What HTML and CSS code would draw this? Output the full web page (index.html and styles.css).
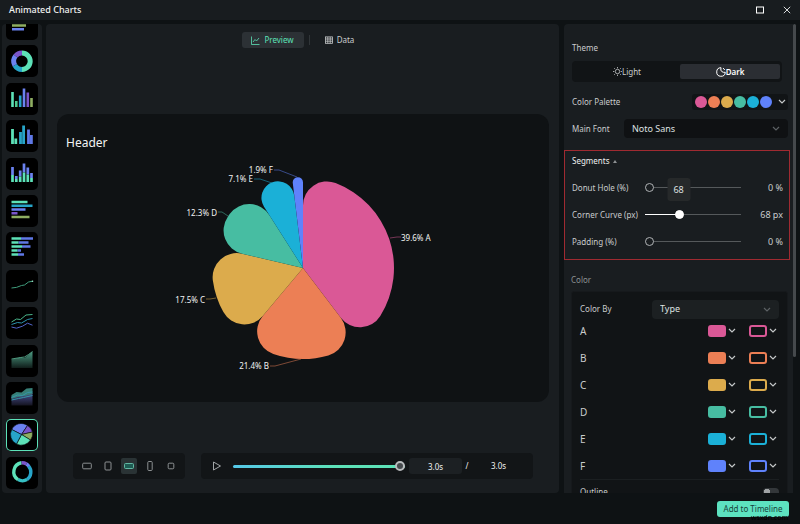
FILE: index.html
```html
<!DOCTYPE html>
<html lang="en">
<head>
    <meta charset="utf-8">
    <title>Animated Charts</title>
    <meta name="viewport" content="width=device-width, initial-scale=1.0">
    <link rel="stylesheet" href="styles.css">
</head>
<body>
    <header class="titlebar">
        <h1>Animated Charts</h1>
        <button class="window-btn" aria-label="Maximize">
            <svg width="8" height="8" viewBox="0 0 8 8"><rect x="0.5" y="1" width="7" height="6" fill="none" stroke="#fff" stroke-width="1"/></svg>
        </button>
        <button class="window-btn" aria-label="Close">
            <svg width="8" height="8" viewBox="0 0 8 8"><path d="M0.8 0.8 7.2 7.2M7.2 0.8 0.8 7.2" stroke="#d8dadb" stroke-width="1"/></svg>
        </button>
    </header>

    <div class="workspace">
        <!-- Chart types -->
        <nav class="types" aria-label="Chart types">
            <div class="type-list">
                <button class="type" aria-label="Horizontal bar">
                    <svg viewBox="0 0 32 32"><g stroke-width="2.4"><path d="M6 8h18" stroke="#5de2b8"/><path d="M6 12h12" stroke="#27a4c8"/><path d="M6 17.500h14" stroke="#8fae62"/><path d="M6 21.300h12" stroke="#6b82f0"/></g></svg>
                </button>
                <button class="type" aria-label="Donut">
                    <svg viewBox="0 0 32 32" fill="none" stroke-width="5"><path d="M16 8A8.200 8.200 0 0 1 16 24.400" stroke="#5de2b8"/><path d="M16 24.400A8.200 8.200 0 0 1 8.800 20.200" stroke="#27a4c8"/><path d="M8.800 20.200A8.200 8.200 0 0 1 9.500 11" stroke="#6b82f0"/><path d="M9.500 11A8.200 8.200 0 0 1 16 8" stroke="#7a55c9"/></svg>
                </button>
                <button class="type" aria-label="Column">
                    <svg viewBox="0 0 32 32" stroke-width="2.6"><path d="M6.5 9v15" stroke="#5de2b8"/><path d="M10.3 18v6" stroke="#4fc98f"/><path d="M14.2 12.500v11.500" stroke="#27a4c8"/><path d="M18 5.500v18.500" stroke="#6b82f0"/><path d="M21.800 9.500v14.500" stroke="#7a55c9"/><path d="M25.500 15v9" stroke="#8fae62"/></svg>
                </button>
                <button class="type" aria-label="Grouped column">
                    <svg viewBox="0 0 32 32" stroke-width="2.8"><path d="M6.500 9v15M9.800 18.500v5.500" stroke="#5de2b8"/><path d="M14.500 12v12M17.600 5.500v18.500" stroke="#27a4c8"/><path d="M22.500 9.500v14.500M25.400 15v9" stroke="#5f78e6"/></svg>
                </button>
                <button class="type" aria-label="Stacked column">
                    <svg viewBox="0 0 32 32" stroke-width="2.700"><path d="M6.500 9v8M10.300 18v3M14.200 12.500v6M18 5.500v9M21.800 9.500v7M25.500 15v5" stroke="#6b82f0"/><path d="M6.500 17v7M10.300 21v3M14.200 18.500v5.500M18 14.500v9.500M21.800 16.500v7.500M25.500 20v4" stroke="#5de2b8"/></svg>
                </button>
                <button class="type" aria-label="Bar">
                    <svg viewBox="0 0 32 32" stroke-width="2.400"><path d="M5.500 7h16" stroke="#5de2b8"/><path d="M5.500 10.800h21" stroke="#27a4c8"/><path d="M5.500 14.500h14" stroke="#6b82f0"/><path d="M5.500 18.200h6" stroke="#7a55c9"/><path d="M5.500 22h18" stroke="#8fae62"/></svg>
                </button>
                <button class="type" aria-label="Stacked bar">
                    <svg viewBox="0 0 32 32" stroke-width="2.600"><path d="M15 6.500h12M12.500 10.500h10M16 14.500h8.500M11.500 18.500h3.500M12 22.500h6" stroke="#5f78e6"/><path d="M5.500 6.500H15M5.500 10.500h7M5.500 14.500H16M5.500 18.500h6M5.500 22.500h6.500" stroke="#5de2b8"/></svg>
                </button>
                <button class="type" aria-label="Line">
                    <svg viewBox="0 0 32 32" fill="none"><path d="M5.500 18q5 0 10-2.500l3-.5 4-3 4-.8" stroke="#3f9d7c" stroke-width="1"/><circle cx="26.500" cy="11.200" r=".8" fill="#9fe6cb"/></svg>
                </button>
                <button class="type" aria-label="Multi line">
                    <svg viewBox="0 0 32 32" fill="none" stroke-width="1"><path d="M5.500 15l5-3 4 .5L20 8l6.500-.5" stroke="#49b58b"/><path d="M5.500 17.500l6-2 4 .5 6-3.500 5-1" stroke="#2d93ad"/><path d="M5.500 20l5 1.200 6-2 5-3 5 2" stroke="#5265c8"/></svg>
                </button>
                <button class="type" aria-label="Area">
                    <svg viewBox="0 0 32 32"><defs><linearGradient id="area" x1="0" y1="0" x2="0" y2="1"><stop offset="0" stop-color="#4c9b83"/><stop offset="1" stop-color="#101d1a"/></linearGradient></defs><path d="M5.500 14.500l9-2 4 .5 4-3 4-3.500V23h-21z" fill="url(#area)"/><path d="M5.500 14l9-1.500 4-.5 4-2.500 4-3" fill="none" stroke="#5fbb9b" stroke-width=".8"/></svg>
                </button>
                <button class="type" aria-label="Stacked area">
                    <svg viewBox="0 0 32 32"><defs><linearGradient id="stack" x1="0" y1="0" x2="0" y2="1"><stop offset="0" stop-color="#4a4f91"/><stop offset="1" stop-color="#141420"/></linearGradient></defs><path d="M5.500 14l6-2 15-1v12.500h-21z" fill="url(#stack)"/><path d="M5.500 13l5-3 5 .5 5-4 6-.5v6l-8 2-7 1-6 2z" fill="#377f77"/><path d="M5.500 15.500l6-2.500 5 .5 5-3 5-.5M5.500 18l7-1.500 5-1 9-2" fill="none" stroke="#3695a8" stroke-width="1"/></svg>
                </button>
                <button class="type active" aria-label="Pie">
                    <svg viewBox="0 0 32 32" stroke="#050607" stroke-width=".6"><path d="M15.500 15.500 5.700 10.500A10.600 10.600 0 0 1 21.500 6.500z" fill="#6b82f0"/><path d="M15.500 15.500 21.500 6.500A10.600 10.600 0 0 1 26.500 13z" fill="#7a55c9"/><path d="M15.500 15.500 26.500 13A10.600 10.600 0 0 1 24.500 21z" fill="#8fae62"/><path d="M15.500 15.500 24.500 21A10.600 10.600 0 0 1 10.500 25z" fill="#5de2b8"/><path d="M15.500 15.500 10.500 25A10.600 10.600 0 0 1 5.700 10.500z" fill="#27a4c8"/></svg>
                </button>
                <button class="type" aria-label="Ring">
                    <svg viewBox="0 0 32 32" fill="none" stroke-width="3.400"><path d="M22.500 9A9.200 9.200 0 0 1 21 22.600" stroke="#27a4c8"/><path d="M21 22.600A9.200 9.200 0 0 1 12 22.600" stroke="#36bfc4"/><path d="M12 22.600A9.200 9.200 0 0 1 15.500 5.800" stroke="#5de2b8"/><path d="M15.500 5.800A9.200 9.200 0 0 1 20.500 7" stroke="#7a55c9"/><path d="M20.500 7A9.200 9.200 0 0 1 22.800 9.200" stroke="#6b82f0"/></svg>
                </button>
            </div>
        </nav>

        <!-- Preview -->
        <main class="stage">
            <div class="tabs">
                <button class="tab active">
                    <svg width="9" height="9" viewBox="0 0 9 9" fill="none" stroke="currentColor" stroke-width=".8"><path d="M.5.500v8h8M2 6l2-2.500 1.500 1.500L8 2"/></svg>
                    Preview
                </button>
                <span class="tab-line"></span>
                <button class="tab tab-data">
                    <svg width="8" height="8" viewBox="0 0 8 8" fill="none" stroke="currentColor" stroke-width=".8"><rect x=".5" y=".9" width="7" height="6.400"/><path d="M.5 3h7M.5 5.200h7M2.800 1v6.300M5.200 1v6.300"/></svg>
                    Data
                </button>
            </div>

            <div class="card">
                <svg class="chart" viewBox="0 0 492 288" role="img" aria-label="Pie chart">
                    <text class="chart-title" x="9" y="33">Header</text>
                    <g id="pie" transform="translate(246 154)"></g>
                </svg>
            </div>

            <div class="toolbars">
                <div class="bar ratios">
                    <button class="ratio" aria-label="4:3"><svg width="10" height="10" viewBox="0 0 10 10"><rect x=".7" y="2.200" width="8.600" height="5.600" rx="1"/></svg></button>
                    <button class="ratio" aria-label="3:4"><svg width="10" height="10" viewBox="0 0 10 10"><rect x="2" y="1" width="6" height="8" rx="1"/></svg></button>
                    <button class="ratio active" aria-label="16:9"><svg width="10" height="10" viewBox="0 0 10 10"><rect x=".5" y="2.500" width="9" height="5" rx="1"/></svg></button>
                    <button class="ratio" aria-label="9:16"><svg width="10" height="10" viewBox="0 0 10 10"><rect x="2.800" y=".5" width="4.400" height="9" rx="1"/></svg></button>
                    <button class="ratio" aria-label="1:1"><svg width="10" height="10" viewBox="0 0 10 10"><rect x="2.200" y="2.200" width="5.600" height="5.600" rx="1"/></svg></button>
                </div>
                <div class="bar player">
                    <button class="play" aria-label="Play"><svg width="10" height="10" viewBox="0 0 10 10"><path d="M1.500 1 8.500 5 1.500 9z"/></svg></button>
                    <input class="seek" type="range" min="0" max="3" step="0.1" value="3" aria-label="Position">
                    <input class="time" type="text" value="3.0s" aria-label="Current time">
                    <span class="slash">/</span>
                    <span class="total">3.0s</span>
                </div>
            </div>
        </main>

        <!-- Settings -->
        <aside class="settings">
            <div class="panel">
                <section class="general">
                    <h2>Theme</h2>
                    <div class="theme">
                        <button class="theme-btn">
                            <svg width="9" height="9" viewBox="0 0 9 9" fill="none" stroke="currentColor" stroke-width=".8"><circle cx="4.500" cy="4.500" r="2.200"/><path d="M4.500 0v1.300M4.500 7.700V9M0 4.500h1.300M7.700 4.500H9M1.200 1.200l.9.900M6.900 6.900l.9.900M7.800 1.200l-.9.900M2.100 6.900l-.9.900"/></svg>Light
                        </button>
                        <button class="theme-btn active">
                            <svg width="10" height="10" viewBox="0 0 10 10" fill="none" stroke="currentColor" stroke-width="1"><path d="M5 .7A4.300 4.300 0 1 0 9.300 5.300M5 .7Q4.200 3.500 5.800 4.600T9.300 5.300"/><path d="M7 1l1.800 2"/></svg>Dark
                        </button>
                    </div>
                    <div class="row">
                        <span class="name">Color Palette</span>
                        <button class="palette" aria-label="Color palette">
                            <i class="dot a"></i><i class="dot b"></i><i class="dot c"></i><i class="dot d"></i><i class="dot e"></i><i class="dot f"></i>
                            <svg class="caret" width="8" height="5" viewBox="0 0 8 5"><path d="M1 1l3 3 3-3"/></svg>
                        </button>
                    </div>
                    <div class="row">
                        <label class="name" for="font">Main Font</label>
                        <span class="pick pick-font">
                            <select id="font"><option>Noto Sans</option></select>
                            <svg class="caret" width="8" height="5" viewBox="0 0 8 5"><path d="M1 1l3 3 3-3"/></svg>
                        </span>
                    </div>
                </section>

                <section class="segments">
                    <h2>Segments <svg width="4" height="3" viewBox="0 0 4 3"><path d="M2 0 4 3H0z" fill="#8d9193"/></svg></h2>
                    <div class="row">
                        <label class="name" for="hole">Donut Hole (%)</label>
                        <span class="slide"><input id="hole" type="range" min="0" max="100" value="0"></span>
                        <output class="value" for="hole">0 %</output>
                    </div>
                    <div class="row">
                        <label class="name" for="curve">Corner Curve (px)</label>
                        <span class="slide"><input class="filled" id="curve" type="range" min="0" max="200" value="68" style="--fill: 34%"><span class="tip">68</span></span>
                        <output class="value" for="curve">68 px</output>
                    </div>
                    <div class="row">
                        <label class="name" for="padding">Padding (%)</label>
                        <span class="slide"><input id="padding" type="range" min="0" max="100" value="0"></span>
                        <output class="value" for="padding">0 %</output>
                    </div>
                </section>

                <section class="colors">
                    <h2>Color</h2>
                    <div class="color-box">
                        <div class="row color-by">
                            <label class="name" for="by">Color By</label>
                            <span class="pick pick-type">
                                <select id="by"><option>Type</option></select>
                                <svg class="caret" width="8" height="5" viewBox="0 0 8 5"><path d="M1 1l3 3 3-3"/></svg>
                            </span>
                        </div>
                        <div id="colorRows"></div>
                        <div class="row outline">
                            <label for="outline">Outline</label>
                            <input class="toggle" id="outline" type="checkbox">
                        </div>
                    </div>
                </section>
            </div>
            <div class="scroll"></div>
        </aside>
    </div>

    <footer class="footer">
        <button class="add">Add to Timeline</button>
        <span class="site">wsxdn.com</span>
    </footer>

    <script src="script.js"></script>
</body>
</html>
```

FILE: styles.css
```css
:root {
    --a: #da5896;
    --b: #ec7f55;
    --c: #dcab4c;
    --d: #47bda2;
    --e: #1bb0d7;
    --f: #5f82fb;
}

* {
    box-sizing: border-box;
}

body {
    display: flex;
    flex-direction: column;
    height: 100vh;
    margin: 0;
    overflow: hidden;
    background-color: #0e1214;
    color: #c9cccd;
    font-family: "Noto Sans", "Open Sans", sans-serif;
    font-size: 8px;
    line-height: 12px;
}

button,
input,
select {
    margin: 0;
    padding: 0;
    border: 0;
    background: none;
    color: inherit;
    font: inherit;
}

h1,
h2 {
    margin: 0;
    font-size: 8px;
    font-weight: 400;
}

svg {
    display: block;
    flex: none;
}

/* Title bar */
.titlebar {
    display: flex;
    align-items: center;
    gap: 19px;
    flex: none;
    height: 20px;
    padding: 0 9px;
    background-color: #181c1f;
}

.titlebar h1 {
    flex: 1;
    color: #f0f1f1;
    font-size: 9px;
    font-weight: 500;
}

.workspace {
    display: flex;
    flex: 1;
    min-height: 0;
    padding: 4px 4px 0 2px;
}

/* Chart types */
.types {
    flex: none;
    width: 40px;
    margin-right: 4px;
    padding: 0 4px 4px;
    overflow: hidden;
    border-radius: 4px;
    background-color: #191d20;
}

.type-list {
    display: flex;
    flex-direction: column;
    justify-content: space-between;
    height: calc(100% + 16px);
    margin-top: -16px;
}

.type {
    height: 32px;
    border-radius: 5px;
    background-color: #000;
}

.type svg {
    width: 32px;
    height: 32px;
}

.type.active {
    box-shadow: inset 0 0 0 1px #5de2b8;
}

/* Preview */
.stage {
    display: flex;
    flex: 1;
    flex-direction: column;
    min-width: 0;
    margin-right: 5px;
    padding: 8px 10px 14px 11px;
    border-radius: 4px;
    background-color: #191d20;
}

.tabs {
    display: flex;
    align-items: center;
    justify-content: center;
    gap: 5px;
    margin-bottom: 66px;
}

.tab {
    display: flex;
    align-items: center;
    justify-content: center;
    gap: 4px;
    width: 62px;
    height: 16px;
    border-radius: 3px;
}

.tab-data {
    width: 50px;
}

.tab.active {
    background-color: #2c3135;
    color: #5de2b8;
}

.tab-line {
    width: 1px;
    height: 10px;
    background-color: #303538;
}

.card {
    border-radius: 12px;
    background-color: #0f1214;
}

.chart {
    width: 100%;
}

.chart-title {
    fill: #f2f3f3;
    font-size: 12px;
}

.chart-label {
    fill: #f2f3f3;
    font-size: 8px;
}

.leader {
    fill: none;
    stroke-width: 1;
    opacity: 0.5;
}

.toolbars {
    display: flex;
    gap: 16px;
    margin-top: auto;
    padding: 0 16px;
}

.bar {
    display: flex;
    align-items: center;
    height: 26px;
    border-radius: 4px;
    background-color: #121517;
}

.ratios {
    gap: 5px;
    padding: 0 6px;
}

.ratio {
    display: flex;
    align-items: center;
    justify-content: center;
    width: 16px;
    height: 16px;
    border-radius: 2px;
}

.ratio rect {
    fill: none;
    stroke: #8c9092;
    stroke-width: 1;
}

.ratio.active {
    background-color: #2a3335;
}

.ratio.active rect {
    fill: #1e5c53;
    stroke: #62b8a3;
}

.player {
    flex: 1;
    padding: 0 8px 0 11px;
}

.play path {
    fill: none;
    stroke: #a2a6a8;
    stroke-width: 1;
}

.seek {
    flex: 1;
    min-width: 0;
    height: 10px;
    margin: 0 4px 0 11px;
    appearance: none;
}

.seek::-webkit-slider-runnable-track {
    height: 3px;
    border-radius: 2px;
    background: linear-gradient(to right, #55c8e8, #5de2b8 60%);
}

.seek::-webkit-slider-thumb {
    width: 10px;
    height: 10px;
    margin-top: -4px;
    border: 2px solid #b9bcbe;
    border-radius: 50%;
    background-color: #45494c;
    appearance: none;
}

.time {
    width: 53px;
    height: 16px;
    border-radius: 3px;
    background-color: #1c2023;
    color: #f0f1f1;
    text-align: center;
}

.slash {
    width: 10px;
    color: #f0f1f1;
    text-align: center;
}

.total {
    width: 53px;
    color: #f0f1f1;
    text-align: center;
}

/* Settings */
.settings {
    display: flex;
    flex: none;
    width: 232px;
}

.panel {
    flex: 1;
    overflow: hidden;
    border-radius: 4px 0 0 0;
    background-color: #191d20;
}

.scroll {
    width: 3px;
    height: 333px;
    border-radius: 2px;
    background-color: #45494c;
}

.row {
    display: flex;
    align-items: center;
    height: 27px;
}

.name {
    flex: 1;
}

.general {
    padding: 18px 5px 0 8px;
}

.theme {
    display: flex;
    height: 21px;
    margin: 7px 6px 6px 0;
    padding: 3px 2px;
    border-radius: 4px;
    background-color: #111416;
}

.theme-btn {
    display: flex;
    align-items: center;
    justify-content: center;
    flex: 1;
    border-radius: 2px;
}

.theme-btn.active {
    flex: 0 0 100px;
    background-color: #2b2e33;
    color: #fff;
    font-weight: 600;
}

.palette {
    display: flex;
    align-items: center;
    gap: 1px;
    height: 16px;
    padding: 0 2px 0 3px;
    border-radius: 3px;
    background-color: #111416;
}

.dot {
    width: 12px;
    height: 12px;
    border-radius: 50%;
}

.dot.a { background-color: var(--a); }
.dot.b { background-color: var(--b); }
.dot.c { background-color: var(--c); }
.dot.d { background-color: var(--d); }
.dot.e { background-color: var(--e); }
.dot.f { background-color: var(--f); }

.palette .caret {
    margin-left: 5px;
}

.caret path {
    fill: none;
    stroke: #c4c7c8;
    stroke-width: 1.2;
}

.pick {
    position: relative;
    height: 19px;
    border-radius: 4px;
}

.pick select {
    width: 100%;
    height: 100%;
    padding: 0 8px;
    color: #dfe1e1;
    font-size: 9px;
    appearance: none;
}

.pick option {
    background-color: #111416;
}

.pick .caret {
    position: absolute;
    top: 7px;
    right: 8px;
    pointer-events: none;
}

.pick .caret path {
    stroke: #5c6164;
}

.pick-font {
    width: 164px;
    background-color: #0f1113;
}

.pick-type {
    width: 127px;
    background-color: #1c2022;
}

/* Segment sliders */
.segments {
    margin: 8px 3px 0 0;
    padding: 4px 6px 4px 7px;
    border: 1px solid #a02a31;
}

.segments h2 {
    display: flex;
    align-items: center;
    gap: 4px;
    margin-bottom: 7px;
    color: #f0f1f1;
}

.slide {
    position: relative;
    display: flex;
    width: 96px;
}

.slide input {
    width: 100%;
    height: 9px;
    appearance: none;
}

.slide input::-webkit-slider-runnable-track {
    height: 1px;
    background-color: #55595b;
}

.slide input::-webkit-slider-thumb {
    width: 9px;
    height: 9px;
    margin-top: -4px;
    border: 1px solid #b0b3b5;
    border-radius: 50%;
    background-color: #191d20;
    appearance: none;
}

.slide .filled::-webkit-slider-runnable-track {
    background: linear-gradient(to right, #fff var(--fill), #55595b var(--fill));
}

.slide .filled::-webkit-slider-thumb {
    border-color: #fff;
    background-color: #fff;
}

.tip {
    position: absolute;
    bottom: 18px;
    left: 35%;
    width: 23px;
    border-radius: 3px;
    background-color: #26292a;
    color: #dfe1e1;
    font-size: 9px;
    line-height: 23px;
    text-align: center;
    transform: translateX(-50%);
}

.value {
    width: 42px;
    font-size: 9px;
    text-align: right;
}

/* Colors */
.colors {
    padding: 14px 5px 0 7px;
}

.colors h2 {
    margin-bottom: 5px;
    color: #8d9193;
}

.color-box {
    padding: 4px 8px;
    border: 1px solid #16191c;
    border-radius: 3px;
    background-color: #111416;
}

.color-by {
    height: 26px;
    margin-bottom: -5px;
}

.letter {
    flex: 1;
    font-size: 10px;
}

.swatch {
    display: flex;
    align-items: center;
    gap: 2px;
    width: 41px;
}

.swatch + .swatch {
    width: 30px;
}

.chip {
    width: 18px;
    height: 12px;
    border: 2px solid;
    border-radius: 3px;
}

.outline {
    justify-content: space-between;
    height: 24px;
    border-top: 1px solid #1b1f21;
}

.toggle {
    width: 16px;
    height: 8px;
    border-radius: 4px;
    background: radial-gradient(circle at 4px 4px, #a0a3a5 3px, #33373a 3px);
    appearance: none;
}

/* Footer */
.footer {
    position: relative;
    display: flex;
    flex: none;
    align-items: center;
    justify-content: flex-end;
    height: 31px;
    padding: 0 11px;
}

.add {
    width: 72px;
    height: 16px;
    border-radius: 3px;
    background-color: #5de2c0;
    color: #17413a;
}

.site {
    position: absolute;
    right: 12px;
    bottom: 2px;
    color: #000;
    font-size: 7px;
    line-height: 8px;
}
```

FILE: script.js
```js
const segments = [
    { name: "A", value: 39.6, color: "#da5896", line: "M87-30l7-1h4", x: 98, y: -27, anchor: "start" },
    { name: "B", value: 21.4, color: "#ec7f55", line: "M-2 91L-28 98h-5", x: -34, y: 101, anchor: "end" },
    { name: "C", value: 17.5, color: "#dcab4c", line: "M-87 30l-6 1h-4", x: -98, y: 35, anchor: "end" },
    { name: "D", value: 12.3, color: "#47bda2", line: "M-75-52l-6-4h-4", x: -86, y: -52, anchor: "end" },
    { name: "E", value: 7.1, color: "#1bb0d7", line: "M-31-85L-43-89h-6", x: -50, y: -86, anchor: "end" },
    { name: "F", value: 1.9, color: "#5f82fb", line: "M-6-91L-24-98h-5", x: -30, y: -95, anchor: "end" }
];

const radius = 91;
const corner = 24;

// Point at an angle measured clockwise from the top
function point(angle, r) {
    return (Math.sin(angle) * r).toFixed(2) + " " + (-Math.cos(angle) * r).toFixed(2);
}

// Pie slice with rounded outer corners
function slice(start, end) {
    const s = Math.sin(Math.min(end - start, Math.PI) / 2);
    const rc = Math.min(corner, radius * s / (1 + s));
    const d = radius - rc;
    const turn = Math.asin(rc / d);
    const edge = Math.sqrt(d * d - rc * rc);
    return "M0 0L" + point(start, edge) +
        "A" + rc + " " + rc + " 0 0 1 " + point(start + turn, radius) +
        "A" + radius + " " + radius + " 0 0 1 " + point(end - turn, radius) +
        "A" + rc + " " + rc + " 0 0 1 " + point(end, edge) + "Z";
}

const total = segments.reduce((sum, seg) => sum + seg.value, 0);
let angle = 0;
let pie = "";
let rows = "";
const caret = '<svg class="caret" width="8" height="5" viewBox="0 0 8 5"><path d="M1 1l3 3 3-3"/></svg>';

segments.forEach(seg => {
    const next = angle + seg.value / total * Math.PI * 2;
    pie += `<path d="${slice(angle, next)}" fill="${seg.color}"/>
        <path class="leader" d="${seg.line}" stroke="${seg.color}"/>
        <text class="chart-label" x="${seg.x}" y="${seg.y}" text-anchor="${seg.anchor}">${seg.value}% ${seg.name}</text>`;
    rows += `<div class="row"><span class="letter">${seg.name}</span>
        <button class="swatch" aria-label="${seg.name} fill"><span class="chip" style="color: ${seg.color}; background-color: ${seg.color}"></span>${caret}</button>
        <button class="swatch" aria-label="${seg.name} line"><span class="chip" style="color: ${seg.color}"></span>${caret}</button></div>`;
    angle = next;
});

document.getElementById("pie").innerHTML = pie;
document.getElementById("colorRows").innerHTML = rows;
```
